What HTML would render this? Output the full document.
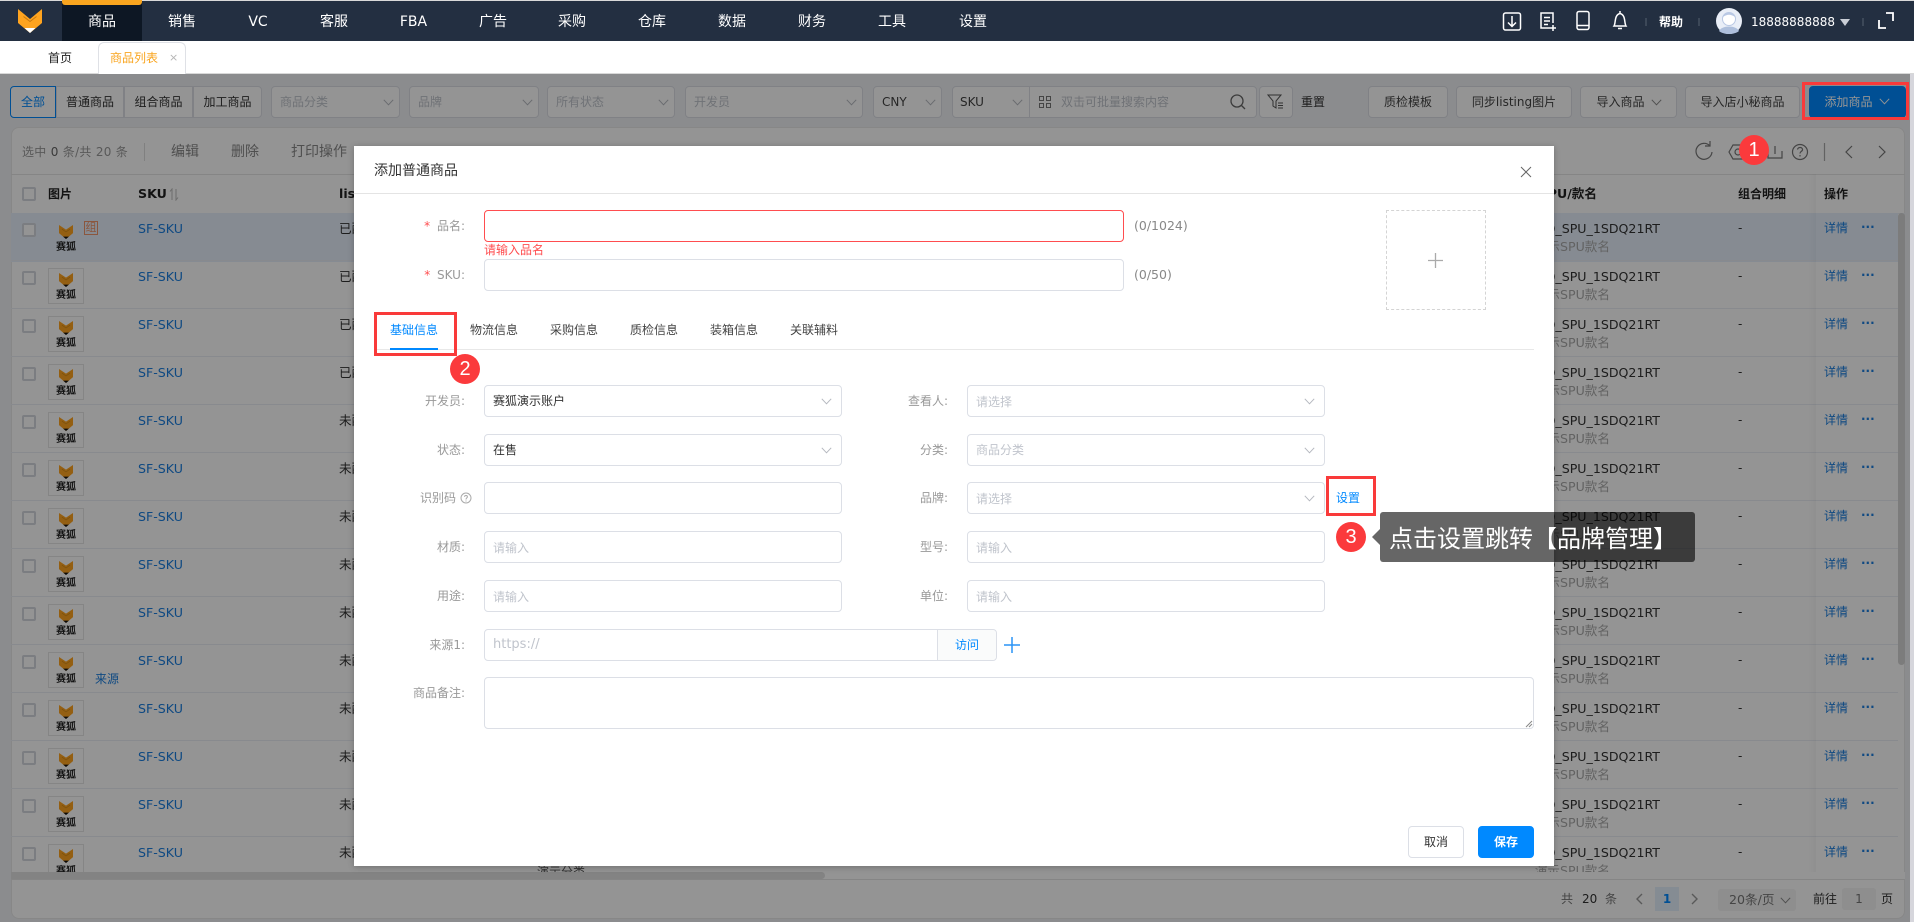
<!DOCTYPE html>
<html lang="zh-CN"><head><meta charset="utf-8"><title>添加普通商品</title>
<style>
*{box-sizing:border-box}
html,body{margin:0;padding:0;width:1914px;height:922px;overflow:hidden;background:#f0f2f5}
body{font:12px/1.2 "DejaVu Sans","WenQuanYi Zen Hei","Noto Sans CJK SC",sans-serif;color:#333;position:relative}
.t{position:absolute;white-space:nowrap}
.nav{position:absolute;left:0;top:1px;width:1914px;height:40px;background:#232f41}
.nav .m{position:absolute;top:0;height:40px;line-height:42px;text-align:center;color:#fff;font-size:14px}
.sel,.btn,.inp{position:absolute;background:#fff;border:1px solid #dcdfe6;border-radius:4px;height:32px;line-height:30px;white-space:nowrap}
.sel{padding-left:8px;color:#c0c4cc}
.btn{text-align:center;color:#444}
.ch{position:absolute;width:11px;height:7px;fill:none;stroke:#b5b8bf;stroke-width:1}
.seg{position:absolute;top:86px;height:32px;line-height:30px;text-align:center;background:#fff;border:1px solid #dcdfe6;margin-left:-1px}
.card{position:absolute;left:11px;top:127px;width:1894px;height:792px;background:#fff;border-radius:8px;border:1px solid #e8e8e8}
.body{position:absolute;left:0;top:213px;width:1898px;height:659px;overflow:hidden}
.r{position:absolute;left:11px;width:1887px;height:48px;border-bottom:1px solid #ebeef5}
.r>*{position:absolute;white-space:nowrap}
.cb{left:11px;top:10px;width:14px;height:14px;border:2px solid #d5d8df;background:#fff;border-radius:2px}
.th{left:37px;top:7px;width:36px;height:36px;border:1px solid #e6e6e6}
.fx{left:47px;top:12px;width:16px;height:14px}
.lg{left:45px;top:29px;width:20px;font-size:10px;font-weight:bold;color:#222;line-height:12px;letter-spacing:0}
.sk{left:127px;top:8px;color:#1a7fe0;font-size:12.6px}
.st{left:328px;top:8px;color:#333;font-size:12.6px}
.sp{right:238px;top:8px;color:#333;font-size:12.6px}
.sm{right:288px;top:26px;color:#aaa;font-size:12.6px}
.da{left:1727px;top:8px}
.de{left:1813px;top:8px;color:#1a7fe0}
.do{left:1850px;top:7px;color:#1a7fe0;font-weight:bold;font-size:12px;letter-spacing:0}
.modal{position:absolute;left:354px;top:146px;width:1200px;height:720px;background:#fff;box-shadow:0 1px 6px rgba(0,0,0,.25)}
.lb{position:absolute;text-align:right;color:#999;height:16px;line-height:16px;white-space:nowrap}
.inp{padding-left:8px;color:#c0c4cc;line-height:32px}
.inp.v{color:#333;line-height:30px}
.red{position:absolute;border:3px solid #f93a3a}
.dot{position:absolute;width:30px;height:30px;border-radius:50%;background:#fb3a3c;color:#fff;text-align:center;font:20px/30px "Liberation Sans",sans-serif}
.tab{position:absolute;top:323px;color:#444;line-height:14px}
</style></head><body>
<svg width="0" height="0" style="position:absolute"><defs>
<symbol id="fox" viewBox="0 0 24 24"><path d="M0 0 12 10 24 0V14L12 24 0 14Z" fill="#ffa41f"/><path d="M5.500 7.500 12 12.500 18.500 7.500" fill="none" stroke="#c97a10" stroke-width="1"/><path d="M6.500 19H17.500L12 24Z" fill="#fff"/></symbol>
<symbol id="foxd" viewBox="0 0 24 24"><path d="M0 0 12 8 24 0V14L12 24 0 14Z" fill="#ffa41f"/><path d="M5 7 12 12 19 7" fill="none" stroke="#d08a18" stroke-width="1.200"/><path d="M7 20H17L12 24Z" fill="#111"/></symbol>
<symbol id="cv" viewBox="0 0 11 7"><path d="M.8.8 5.500 5.800 10.200.8"/></symbol>
</defs></svg>

<!-- top nav -->
<div style="position:absolute;left:0;top:0;width:1914px;height:1px;background:#d9d9d9"></div>
<div class="nav">
<svg style="position:absolute;left:18px;top:8px" width="24" height="24"><use href="#fox"/></svg>
<div style="position:absolute;left:62px;top:0;width:80px;height:40px;background:#0d1724"></div>
<div style="position:absolute;left:62px;top:-1px;width:80px;height:5px;background:#f9a51f;border-radius:0 0 3px 3px"></div>
<div class="m" style="left:62px;width:80px">商品</div>
<div class="m" style="left:142px;width:80px">销售</div>
<div class="m" style="left:222px;width:72px">VC</div>
<div class="m" style="left:294px;width:80px">客服</div>
<div class="m" style="left:374px;width:79px">FBA</div>
<div class="m" style="left:453px;width:80px">广告</div>
<div class="m" style="left:532px;width:80px">采购</div>
<div class="m" style="left:612px;width:80px">仓库</div>
<div class="m" style="left:692px;width:80px">数据</div>
<div class="m" style="left:772px;width:80px">财务</div>
<div class="m" style="left:852px;width:80px">工具</div>
<div class="m" style="left:933px;width:80px">设置</div>
<svg style="position:absolute;left:1500px;top:0" width="400" height="40" fill="none" stroke="#fff" stroke-width="1.500">
<rect x="3.500" y="12" width="17" height="17" rx="2"/><path d="M12 15V25M8 21.500 12 25.500 16 21.500"/>
<path d="M53 27H41V12H53V22M44 16.500H50M44 20H50M44 23.500H48M53 24V30M50 27H56"/>
<rect x="77" y="10.500" width="12" height="18" rx="2"/><path d="M77 24.500H89"/>
<path d="M114 25C116 22 114 14 120 12.500 126 14 124 22 126 25ZM118 27.500H122M120 10V12"/>
<path d="M146 17V25M199 17V25M363 17V25" stroke="#55606f" stroke-width="1"/>
<path d="M379 19V27H386M393 20V12H386" stroke-width="1.800"/>
</svg>
<div class="t" style="left:1659px;top:13px;color:#fff;font-weight:bold;line-height:16px">帮助</div>
<svg style="position:absolute;left:1716px;top:7px" width="26" height="26"><circle cx="13" cy="13" r="13" fill="#e9eef7"/><circle cx="13" cy="11" r="6.500" fill="#fff" stroke="#b9c8e4"/><path d="M3 23C6 17 20 17 23 23 18 27 8 27 3 23Z" fill="#aebfdc"/><path d="M7 9C8 3 18 3 19 9 15 6 11 6 7 9Z" fill="#b9c8e4"/></svg>
<div class="t" style="left:1751px;top:13px;color:#fff;line-height:16px">18888888888</div>
<div style="position:absolute;left:1840px;top:18px;border:5px solid transparent;border-top:7px solid #c9ced6;border-bottom:0"></div>
</div>

<!-- tab bar -->
<div style="position:absolute;left:0;top:41px;width:1914px;height:33px;background:#fff;border-bottom:1px solid #d8d8d8"></div>
<div class="t" style="left:48px;top:51px;color:#222;line-height:14px">首页</div>
<div style="position:absolute;left:98px;top:42px;width:88px;height:32px;background:#fff;border:1px solid #dfe1e6;border-bottom:0;border-radius:6px 6px 0 0"></div>
<div class="t" style="left:110px;top:51px;color:#f9a51f;line-height:14px">商品列表</div>
<div class="t" style="left:169px;top:51px;color:#b5b5b5;font-size:11px;line-height:14px">×</div>

<!-- filter row -->
<div class="seg" style="left:57px;width:68px">普通商品</div>
<div class="seg" style="left:125px;width:69px">组合商品</div>
<div class="seg" style="left:194px;width:69px;border-radius:0 4px 4px 0">加工商品</div>
<div class="seg" style="left:11px;width:46px;color:#0089ff;border-color:#0089ff;border-radius:4px 0 0 4px">全部</div>
<div class="sel" style="left:271px;top:86px;width:129px">商品分类<svg class="ch" style="left:111px;top:12px"><use href="#cv"/></svg></div>
<div class="sel" style="left:409px;top:86px;width:130px">品牌<svg class="ch" style="left:112px;top:12px"><use href="#cv"/></svg></div>
<div class="sel" style="left:547px;top:86px;width:128px">所有状态<svg class="ch" style="left:110px;top:12px"><use href="#cv"/></svg></div>
<div class="sel" style="left:685px;top:86px;width:178px">开发员<svg class="ch" style="left:160px;top:12px"><use href="#cv"/></svg></div>
<div class="sel" style="left:873px;top:86px;width:69px;color:#444">CNY<svg class="ch" style="left:51px;top:12px"><use href="#cv"/></svg></div>
<div class="sel" style="left:952px;top:86px;width:78px;color:#444;border-radius:4px 0 0 4px;padding-left:7px">SKU<svg class="ch" style="left:59px;top:12px"><use href="#cv"/></svg></div>
<div class="sel" style="left:1029px;top:86px;width:228px;padding-left:31px;border-radius:0 4px 4px 0">双击可批量搜索内容</div>
<svg style="position:absolute;left:1038px;top:95px" width="14" height="14" fill="none" stroke="#777"><rect x="1.500" y="1.500" width="4" height="4"/><rect x="8.500" y="1.500" width="4" height="4"/><rect x="1.500" y="8.500" width="4" height="4"/><rect x="8.500" y="8.500" width="4" height="4"/></svg>
<svg style="position:absolute;left:1229px;top:93px" width="18" height="18" fill="none" stroke="#666" stroke-width="1.300"><circle cx="8" cy="8" r="6"/><path d="M12.500 12.500 16 16"/></svg>
<div class="btn" style="left:1259px;top:86px;width:34px"></div>
<svg style="position:absolute;left:1267px;top:94px" width="18" height="16" fill="none" stroke="#555"><path d="M1 1H14L9 7V14L6 12V7ZM11 9H16M11 11.500H16M11 14H16"/></svg>
<div class="t" style="left:1301px;top:95px;color:#333;line-height:14px">重置</div>
<div class="btn" style="left:1368px;top:86px;width:80px">质检模板</div>
<div class="btn" style="left:1456px;top:86px;width:116px">同步listing图片</div>
<div class="btn" style="left:1580px;top:86px;width:97px;padding-right:16px">导入商品<svg class="ch" style="left:70px;top:12px;stroke:#888"><use href="#cv"/></svg></div>
<div class="btn" style="left:1685px;top:86px;width:115px">导入店小秘商品</div>
<div class="btn" style="left:1809px;top:86px;width:97px;background:#0089ff;border-color:#0089ff;color:#fff;padding-right:18px">添加商品<svg class="ch" style="left:69px;top:11px;stroke:#fff"><use href="#cv"/></svg></div>

<!-- card -->
<div class="card"></div>
<div style="position:absolute;left:11px;top:174px;width:1894px;height:1px;background:#e6e6e6"></div>
<div class="t" style="left:22px;top:144px;color:#999;line-height:16px;letter-spacing:.3px">选中 <b style="color:#666;font-weight:normal">0</b> 条/共 20 条</div>
<div style="position:absolute;left:144px;top:143px;width:1px;height:18px;background:#ddd"></div>
<div class="t" style="left:171px;top:143px;color:#888;font-size:14px;line-height:18px">编辑</div>
<div class="t" style="left:231px;top:143px;color:#888;font-size:14px;line-height:18px">删除</div>
<div class="t" style="left:291px;top:143px;color:#888;font-size:14px;line-height:18px">打印操作</div>
<svg style="position:absolute;left:1690px;top:138px" width="200" height="28" fill="none" stroke="#777" stroke-width="1.200">
<path d="M20 8A8 8 0 1 0 22 14M20 3V8H15"/>
<path d="M39 14 43 7H53L57 14 53 21H43Z"/><circle cx="48" cy="14" r="3"/>
<path d="M78 13V20H92V13M85 8V16"/>
<circle cx="110" cy="14" r="7.500"/><path d="M107.500 11.500C108 8.500 113 9 112.500 12 112 13.500 110 13.500 110 15.500M110 17V18.500"/>
<path d="M134.500 5V23" stroke="#aaa"/>
<path d="M162 8 156 14 162 20M189 8 195 14 189 20"/>
</svg>
<!-- table head -->
<div style="position:absolute;left:11px;top:213px;width:1894px;height:1px;background:#ebeef5"></div>
<div style="position:absolute;left:22px;top:187px;width:14px;height:14px;border:2px solid #d5d8df;background:#fff;border-radius:2px"></div>
<div class="t" style="left:48px;top:186px;font-weight:bold;color:#222;line-height:16px">图片</div>
<div class="t" style="left:138px;top:186px;font-weight:bold;color:#222;font-size:12.600px;line-height:16px">SKU</div>
<svg style="position:absolute;left:169px;top:188px" width="10" height="13" fill="none" stroke="#bbb"><path d="M3 12V1L1 3.500M7 1V12L9 9.500"/></svg>
<div class="t" style="left:339px;top:186px;font-weight:bold;color:#222;font-size:12.600px;line-height:16px">listing</div>
<div class="t" style="right:317px;top:186px;font-weight:bold;color:#222;font-size:12.600px;line-height:16px">SPU/款名</div>
<div class="t" style="left:1738px;top:186px;font-weight:bold;color:#222;line-height:16px">组合明细</div>
<div class="t" style="left:1824px;top:186px;font-weight:bold;color:#222;line-height:16px">操作</div>

<div class="body">
<div style="position:absolute;left:11px;top:0;width:1887px;height:49px;background:#e7f0fc"></div>
<div class="r" style="top:0"><i class="cb"></i><svg class="fx"><use href="#foxd"/></svg><span class="lg">赛狐</span><span class="sk">SF-SKU</span><span class="st">已配对</span><span class="sp">DEMO_SPU_1SDQ21RT</span><span class="sm">演示SPU款名</span><span class="da">-</span><span class="de">详情</span><span class="do">···</span>
<span style="left:73px;top:8px;width:14px;height:14px;border:1px solid #f0946a;color:#f0946a;font-size:11px;line-height:12px;text-align:center;font-weight:normal">组</span></div>
<div class="r" style="top:48px"><i class="cb"></i><i class="th"></i><svg class="fx"><use href="#foxd"/></svg><span class="lg">赛狐</span><span class="sk">SF-SKU</span><span class="st">已配对</span><span class="sp">DEMO_SPU_1SDQ21RT</span><span class="sm">演示SPU款名</span><span class="da">-</span><span class="de">详情</span><span class="do">···</span></div>
<div class="r" style="top:96px"><i class="cb"></i><i class="th"></i><svg class="fx"><use href="#foxd"/></svg><span class="lg">赛狐</span><span class="sk">SF-SKU</span><span class="st">已配对</span><span class="sp">DEMO_SPU_1SDQ21RT</span><span class="sm">演示SPU款名</span><span class="da">-</span><span class="de">详情</span><span class="do">···</span></div>
<div class="r" style="top:144px"><i class="cb"></i><i class="th"></i><svg class="fx"><use href="#foxd"/></svg><span class="lg">赛狐</span><span class="sk">SF-SKU</span><span class="st">已配对</span><span class="sp">DEMO_SPU_1SDQ21RT</span><span class="sm">演示SPU款名</span><span class="da">-</span><span class="de">详情</span><span class="do">···</span></div>
<div class="r" style="top:192px"><i class="cb"></i><i class="th"></i><svg class="fx"><use href="#foxd"/></svg><span class="lg">赛狐</span><span class="sk">SF-SKU</span><span class="st">未配对</span><span class="sp">DEMO_SPU_1SDQ21RT</span><span class="sm">演示SPU款名</span><span class="da">-</span><span class="de">详情</span><span class="do">···</span></div>
<div class="r" style="top:240px"><i class="cb"></i><i class="th"></i><svg class="fx"><use href="#foxd"/></svg><span class="lg">赛狐</span><span class="sk">SF-SKU</span><span class="st">未配对</span><span class="sp">DEMO_SPU_1SDQ21RT</span><span class="sm">演示SPU款名</span><span class="da">-</span><span class="de">详情</span><span class="do">···</span></div>
<div class="r" style="top:288px"><i class="cb"></i><i class="th"></i><svg class="fx"><use href="#foxd"/></svg><span class="lg">赛狐</span><span class="sk">SF-SKU</span><span class="st">未配对</span><span class="sp">DEMO_SPU_1SDQ21RT</span><span class="sm">演示SPU款名</span><span class="da">-</span><span class="de">详情</span><span class="do">···</span></div>
<div class="r" style="top:336px"><i class="cb"></i><i class="th"></i><svg class="fx"><use href="#foxd"/></svg><span class="lg">赛狐</span><span class="sk">SF-SKU</span><span class="st">未配对</span><span class="sp">DEMO_SPU_1SDQ21RT</span><span class="sm">演示SPU款名</span><span class="da">-</span><span class="de">详情</span><span class="do">···</span></div>
<div class="r" style="top:384px"><i class="cb"></i><i class="th"></i><svg class="fx"><use href="#foxd"/></svg><span class="lg">赛狐</span><span class="sk">SF-SKU</span><span class="st">未配对</span><span class="sp">DEMO_SPU_1SDQ21RT</span><span class="sm">演示SPU款名</span><span class="da">-</span><span class="de">详情</span><span class="do">···</span></div>
<div class="r" style="top:432px"><i class="cb"></i><i class="th"></i><svg class="fx"><use href="#foxd"/></svg><span class="lg">赛狐</span><span class="sk">SF-SKU</span><span class="st">未配对</span><span class="sp">DEMO_SPU_1SDQ21RT</span><span class="sm">演示SPU款名</span><span class="da">-</span><span class="de">详情</span><span class="do">···</span>
<span style="left:84px;top:27px;color:#1a7fe0">来源</span></div>
<div class="r" style="top:480px"><i class="cb"></i><i class="th"></i><svg class="fx"><use href="#foxd"/></svg><span class="lg">赛狐</span><span class="sk">SF-SKU</span><span class="st">未配对</span><span class="sp">DEMO_SPU_1SDQ21RT</span><span class="sm">演示SPU款名</span><span class="da">-</span><span class="de">详情</span><span class="do">···</span></div>
<div class="r" style="top:528px"><i class="cb"></i><i class="th"></i><svg class="fx"><use href="#foxd"/></svg><span class="lg">赛狐</span><span class="sk">SF-SKU</span><span class="st">未配对</span><span class="sp">DEMO_SPU_1SDQ21RT</span><span class="sm">演示SPU款名</span><span class="da">-</span><span class="de">详情</span><span class="do">···</span></div>
<div class="r" style="top:576px"><i class="cb"></i><i class="th"></i><svg class="fx"><use href="#foxd"/></svg><span class="lg">赛狐</span><span class="sk">SF-SKU</span><span class="st">未配对</span><span class="sp">DEMO_SPU_1SDQ21RT</span><span class="sm">演示SPU款名</span><span class="da">-</span><span class="de">详情</span><span class="do">···</span></div>
<div class="r" style="top:624px"><i class="cb"></i><i class="th"></i><svg class="fx"><use href="#foxd"/></svg><span class="lg">赛狐</span><span class="sk">SF-SKU</span><span class="st">未配对</span><span class="sp">DEMO_SPU_1SDQ21RT</span><span class="sm">演示SPU款名</span><span class="da">-</span><span class="de">详情</span><span class="do">···</span></div>
<div class="t" style="left:537px;top:652px;color:#555">演示分类</div>
</div>
<div style="position:absolute;left:1808px;top:174px;width:8px;height:698px;background:linear-gradient(90deg,rgba(0,0,0,0),rgba(0,0,0,.03))"></div>
<div style="position:absolute;left:1898px;top:213px;width:7px;height:452px;background:#d6d6d6;border-radius:4px"></div>
<!-- h scroll -->
<div style="position:absolute;left:11px;top:872px;width:1894px;height:8px;background:#fff;border-bottom:1px solid #e6e6e6"></div>
<div style="position:absolute;left:11px;top:872px;width:814px;height:7px;background:#e2e2e2;border-radius:0 4px 4px 0"></div>
<!-- pagination -->
<div class="t" style="left:1561px;top:891px;color:#777;font-size:12px;line-height:16px">共</div>
<div class="t" style="left:1582px;top:891px;color:#333;line-height:16px">20</div>
<div class="t" style="left:1605px;top:891px;color:#777;line-height:16px">条</div>
<svg style="position:absolute;left:1634px;top:892px" width="66" height="14" fill="none" stroke="#999" stroke-width="1.400"><path d="M8 2 3 7 8 12M58 2 63 7 58 12"/></svg>
<div style="position:absolute;left:1655px;top:887px;width:24px;height:24px;background:#e6f2fe;color:#0089ff;font-weight:bold;text-align:center;line-height:24px">1</div>
<div style="position:absolute;left:1718px;top:889px;width:78px;height:22px;background:#f4f4f4;border-radius:3px;line-height:22px;padding-left:11px;color:#777;white-space:nowrap;font-size:12.600px">20条/页</div>
<svg class="ch" style="left:1780px;top:897px;stroke:#888"><use href="#cv"/></svg>
<div class="t" style="left:1813px;top:891px;color:#333;line-height:16px">前往</div>
<div style="position:absolute;left:1842px;top:888px;width:34px;height:22px;background:#f4f4f4;border-radius:3px;line-height:22px;text-align:center;color:#777">1</div>
<div class="t" style="left:1881px;top:891px;color:#333;line-height:16px">页</div>

<!-- mask -->
<div style="position:absolute;left:0;top:74px;width:1910px;height:848px;background:rgba(0,0,0,.42)"></div>
<div style="position:absolute;left:1910px;top:74px;width:4px;height:848px;background:#d6d6dc"></div>

<!-- modal -->
<div class="modal"></div>
<div class="t" style="left:374px;top:162px;font-size:14px;line-height:18px;color:#333">添加普通商品</div>
<svg style="position:absolute;left:1520px;top:166px" width="12" height="12" fill="none" stroke="#666"><path d="M1 1 11 11M11 1 1 11"/></svg>
<div style="position:absolute;left:354px;top:193px;width:1200px;height:1px;background:#e4e4e4"></div>

<div class="lb" style="left:354px;top:218px;width:111px"><span style="color:#ff4d4f;margin-right:3px">*</span> 品名:</div>
<div class="inp" style="left:484px;top:210px;width:640px;border-color:#ff4d4f"></div>
<div class="t" style="left:484px;top:243px;color:#ff4d4f;line-height:14px">请输入品名</div>
<div class="t" style="left:1134px;top:218px;color:#888;line-height:16px;font-size:12.500px">(0/1024)</div>
<div class="lb" style="left:354px;top:267px;width:111px"><span style="color:#ff4d4f;margin-right:3px">*</span> SKU:</div>
<div class="inp" style="left:484px;top:259px;width:640px"></div>
<div class="t" style="left:1134px;top:267px;color:#888;line-height:16px;font-size:12.500px">(0/50)</div>
<div style="position:absolute;left:1386px;top:210px;width:100px;height:100px;border:1px dashed #d4d4d4"></div>
<svg style="position:absolute;left:1427px;top:252px" width="17" height="17" stroke="#aaa" stroke-width="1.300"><path d="M8.500 1V16M1 8.500H16"/></svg>

<div style="position:absolute;left:374px;top:349px;width:1160px;height:1px;background:#e8e8e8"></div>
<div class="tab" style="left:390px;color:#0089ff">基础信息</div>
<div style="position:absolute;left:390px;top:348px;width:48px;height:2px;background:#0089ff"></div>
<div class="tab" style="left:470px">物流信息</div>
<div class="tab" style="left:550px">采购信息</div>
<div class="tab" style="left:630px">质检信息</div>
<div class="tab" style="left:710px">装箱信息</div>
<div class="tab" style="left:790px">关联辅料</div>

<div class="lb" style="left:354px;top:393px;width:111px">开发员:</div>
<div class="inp v" style="left:484px;top:385px;width:358px">赛狐演示账户<svg class="ch" style="left:336px;top:12px"><use href="#cv"/></svg></div>
<div class="lb" style="left:354px;top:442px;width:111px">状态:</div>
<div class="inp v" style="left:484px;top:434px;width:358px">在售<svg class="ch" style="left:336px;top:12px"><use href="#cv"/></svg></div>
<div class="lb" style="left:354px;top:490px;width:102px">识别码</div>
<svg style="position:absolute;left:460px;top:492px" width="12" height="12" fill="none" stroke="#aaa"><circle cx="6" cy="6" r="5"/><path d="M4.500 4.800C4.700 3 7.500 3.200 7.400 5 7.200 6 6 6 6 7.500M6 8.500V9.500"/></svg>
<div class="inp" style="left:484px;top:482px;width:358px"></div>
<div class="lb" style="left:354px;top:539px;width:111px">材质:</div>
<div class="inp" style="left:484px;top:531px;width:358px">请输入</div>
<div class="lb" style="left:354px;top:588px;width:111px">用途:</div>
<div class="inp" style="left:484px;top:580px;width:358px">请输入</div>
<div class="lb" style="left:354px;top:637px;width:111px">来源1:</div>
<div class="inp" style="left:484px;top:629px;width:513px;font-size:13px;line-height:30px">https://</div>
<div style="position:absolute;left:937px;top:630px;width:59px;height:30px;background:#fafbfb;border-left:1px solid #dcdfe6;border-radius:0 4px 4px 0;text-align:center;line-height:30px;color:#0089ff">访问</div>
<svg style="position:absolute;left:1004px;top:637px" width="16" height="16" stroke="#2a93f5" stroke-width="1.500"><path d="M8 0V16M0 8H16"/></svg>
<div class="lb" style="left:354px;top:685px;width:111px">商品备注:</div>
<div class="inp" style="left:484px;top:677px;width:1050px;height:52px"></div>
<svg style="position:absolute;left:1525px;top:720px" width="8" height="8" stroke="#888"><path d="M1 7 7 1M4 7 7 4"/></svg>

<div class="lb" style="left:850px;top:393px;width:98px">查看人:</div>
<div class="inp" style="left:967px;top:385px;width:358px">请选择<svg class="ch" style="left:336px;top:12px"><use href="#cv"/></svg></div>
<div class="lb" style="left:850px;top:442px;width:98px">分类:</div>
<div class="inp" style="left:967px;top:434px;width:358px;line-height:30px">商品分类<svg class="ch" style="left:336px;top:12px"><use href="#cv"/></svg></div>
<div class="lb" style="left:850px;top:490px;width:98px">品牌:</div>
<div class="inp" style="left:967px;top:482px;width:358px">请选择<svg class="ch" style="left:336px;top:12px"><use href="#cv"/></svg></div>
<div class="t" style="left:1336px;top:491px;color:#0089ff;line-height:14px">设置</div>
<div class="lb" style="left:850px;top:539px;width:98px">型号:</div>
<div class="inp" style="left:967px;top:531px;width:358px">请输入</div>
<div class="lb" style="left:850px;top:588px;width:98px">单位:</div>
<div class="inp" style="left:967px;top:580px;width:358px">请输入</div>

<div class="btn" style="left:1408px;top:826px;width:56px;color:#333">取消</div>
<div class="btn" style="left:1478px;top:826px;width:56px;background:#0089ff;border-color:#0089ff;color:#fff;font-weight:bold">保存</div>

<!-- annotations -->
<div class="red" style="left:1802px;top:82px;width:107px;height:38px"></div>
<div class="dot" style="left:1739px;top:135px">1</div>
<div class="red" style="left:374px;top:312px;width:83px;height:44px"></div>
<div class="dot" style="left:450px;top:354px">2</div>
<div class="red" style="left:1326px;top:476px;width:50px;height:40px"></div>
<div class="dot" style="left:1336px;top:522px">3</div>
<div style="position:absolute;left:1372px;top:529px;border:8px solid transparent;border-right-color:rgba(0,0,0,.6);border-left:0"></div>
<div style="position:absolute;left:1380px;top:512px;width:315px;height:50px;background:rgba(0,0,0,.6);border-radius:3px;color:#fff;font:24px/50px 'Noto Sans CJK SC',sans-serif;padding-left:9px;white-space:nowrap">点击设置跳转【品牌管理】</div>
</body></html>
